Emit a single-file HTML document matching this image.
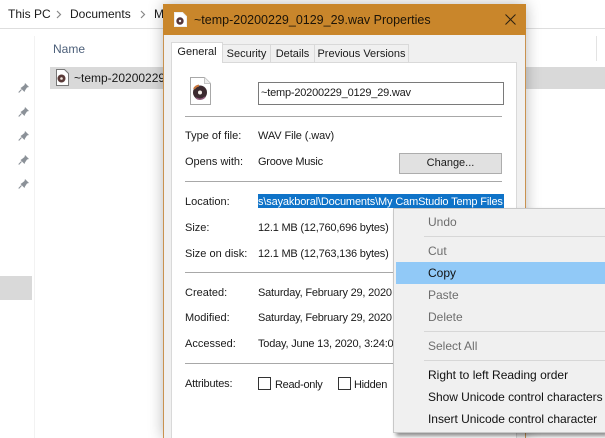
<!DOCTYPE html>
<html>
<head>
<meta charset="utf-8">
<style>
html,body{margin:0;padding:0;background:#fff;overflow:hidden;}
#p{position:relative;width:605px;height:438px;overflow:hidden;background:#fff;font-family:"Liberation Sans",sans-serif;font-size:12px;color:#1a1a1a;}
.a{position:absolute;}
.t{position:absolute;white-space:nowrap;line-height:14px;}
.l{position:absolute;white-space:nowrap;line-height:14px;font-size:11px;}
.sep{position:absolute;height:1px;background:#a8a8a8;}
.m{position:absolute;left:428px;white-space:nowrap;line-height:14px;color:#111;font-size:12px;}
.d{color:#6d6d6d;}
.ms{position:absolute;left:424px;width:181px;height:1px;background:#d7d7d7;}
.tab{position:absolute;top:44px;height:18px;background:#f0f0f0;border:1px solid #d9d9d9;border-bottom:none;box-sizing:border-box;text-align:center;line-height:19px;font-size:11px;}
.cb{position:absolute;width:13px;height:13px;border:1px solid #333;background:#fff;box-sizing:border-box;}
</style>
</head>
<body>
<div id="p">
  <!-- explorer -->
  <div class="t" style="left:8px;top:7px;">This PC</div>
  <svg class="a" style="left:56px;top:10px" width="6" height="9"><path d="M1 1l3.500 3.500L1 8" fill="none" stroke="#888" stroke-width="1.200"/></svg>
  <div class="t" style="left:70px;top:7px;">Documents</div>
  <svg class="a" style="left:140px;top:10px" width="6" height="9"><path d="M1 1l3.500 3.500L1 8" fill="none" stroke="#888" stroke-width="1.200"/></svg>
  <div class="t" style="left:154px;top:7px;">M</div>
  <div class="a" style="left:0;top:28px;width:605px;height:1px;background:#dedede;"></div>
  <div class="a" style="left:34px;top:36px;width:1px;height:402px;background:#f2f2f2;"></div>
  <div class="t" style="left:53px;top:42px;color:#4d607a;">Name</div>
  <div class="a" style="left:596px;top:36px;width:1px;height:25px;background:#e3e3e3;"></div>
  <div class="a" style="left:50px;top:67px;width:555px;height:22px;background:#d9d9d9;"></div>
  <svg class="a" style="left:56px;top:69px" width="13" height="17"><path d="M.5.500h8l4 4v12H.5z" fill="#fff" stroke="#777"/><circle cx="5.500" cy="9.500" r="4" fill="#5a3a38"/><circle cx="5.500" cy="9.500" r="1.300" fill="#f3e9e0"/></svg>
  <div class="t" style="left:74px;top:71px;">~temp-20200229</div>
  <div class="a" style="left:0;top:276px;width:32px;height:24px;background:#d9d9d9;"></div>
  <svg class="a" style="left:18px;top:82px" width="12" height="108" fill="#8b9198" stroke="#8b9198">
    <g><path d="M7 1l4 4-2 .5-2 3-.5 1.500-4-4L4 5l2.500-2z" stroke="none"/><path d="M3.500 7.500L.7 10.500" fill="none" stroke-width="1"/></g>
    <g transform="translate(0,24)"><path d="M7 1l4 4-2 .5-2 3-.5 1.500-4-4L4 5l2.500-2z" stroke="none"/><path d="M3.500 7.500L.7 10.500" fill="none" stroke-width="1"/></g>
    <g transform="translate(0,48)"><path d="M7 1l4 4-2 .5-2 3-.5 1.500-4-4L4 5l2.500-2z" stroke="none"/><path d="M3.500 7.500L.7 10.500" fill="none" stroke-width="1"/></g>
    <g transform="translate(0,72)"><path d="M7 1l4 4-2 .5-2 3-.5 1.500-4-4L4 5l2.500-2z" stroke="none"/><path d="M3.500 7.500L.7 10.500" fill="none" stroke-width="1"/></g>
    <g transform="translate(0,96)"><path d="M7 1l4 4-2 .5-2 3-.5 1.500-4-4L4 5l2.500-2z" stroke="none"/><path d="M3.500 7.500L.7 10.500" fill="none" stroke-width="1"/></g>
  </svg>

  <!-- dialog -->
  <div class="a" style="left:163px;top:4px;width:363px;height:434px;background:#f0f0f0;border-left:1px solid #c9924f;border-right:1px solid #c9924f;box-sizing:border-box;box-shadow:0 0 14px rgba(0,0,0,.28);"></div>
  <div class="a" style="left:163px;top:4px;width:363px;height:31px;background:#c9862b;"></div>
  <svg class="a" style="left:174px;top:12px" width="13" height="15"><path d="M.5.500h8l4 4v10H.5z" fill="#fff" stroke="#eee"/><circle cx="6" cy="9" r="3.700" fill="#55363a"/><circle cx="6" cy="9" r="1.200" fill="#eee"/></svg>
  <div class="t" style="left:194px;top:13px;font-size:12.500px;color:#1c1408;">~temp-20200229_0129_29.wav Properties</div>
  <svg class="a" style="left:505px;top:14px" width="11" height="11"><path d="M.5.500l10 10M10.500.500l-10 10" stroke="#2b2112" stroke-width="1" fill="none"/></svg>

  <div class="a" style="left:171px;top:62px;width:346px;height:376px;background:#fff;border:1px solid #d9d9d9;border-bottom:none;box-sizing:border-box;"></div>
  <div class="tab" style="left:222px;width:49px;">Security</div>
  <div class="tab" style="left:270px;width:45px;">Details</div>
  <div class="tab" style="left:314px;width:95px;">Previous Versions</div>
  <div class="tab" style="left:171px;top:42px;width:52px;height:21px;background:#fff;line-height:19px;">General</div>

  <svg class="a" style="left:190px;top:77px" width="21" height="28"><path d="M.5.500h14l6 6v21H.5z" fill="#fff" stroke="#a8a8a8"/><path d="M14.500.500v6h6" fill="#eee" stroke="#c4c4c4"/><circle cx="10" cy="15.500" r="7" fill="#3b2a30"/><path d="M4 12a7 7 0 0 1 5-3.500" fill="none" stroke="#c8763c" stroke-width="2"/><path d="M15 20a7 7 0 0 1-9 1" fill="none" stroke="#8d5a7a" stroke-width="1.500"/><circle cx="10" cy="15.500" r="2" fill="#f5efe9"/></svg>
  <div class="a" style="left:258px;top:82px;width:246px;height:23px;border:1px solid #7a7a7a;box-sizing:border-box;background:#fff;"></div>
  <div class="l" style="left:261px;top:86px;letter-spacing:-.2px;">~temp-20200229_0129_29.wav</div>
  <div class="sep" style="left:185px;top:116px;width:317px;"></div>

  <div class="l" style="left:185px;top:129px;">Type of file:</div>
  <div class="l" style="left:258px;top:129px;letter-spacing:-.1px;">WAV File (.wav)</div>
  <div class="l" style="left:185px;top:155px;">Opens with:</div>
  <div class="l" style="left:258px;top:155px;letter-spacing:-.25px;">Groove Music</div>
  <div class="a" style="left:399px;top:153px;width:103px;height:21px;background:#e1e1e1;border:1px solid #adadad;box-sizing:border-box;text-align:center;line-height:19px;font-size:11px;">Change...</div>
  <div class="sep" style="left:185px;top:181px;width:317px;"></div>

  <div class="l" style="left:185px;top:195px;">Location:</div>
  <div class="a" style="left:258px;top:194px;width:246px;height:14px;background:#0f73c8;"></div>
  <div class="l" style="left:258px;top:195px;width:246px;overflow:hidden;color:#fff;letter-spacing:-.15px;">s\sayakboral\Documents\My CamStudio Temp Files</div>
  <div class="l" style="left:185px;top:221px;">Size:</div>
  <div class="l" style="left:258px;top:221px;letter-spacing:-.2px;">12.1 MB (12,760,696 bytes)</div>
  <div class="l" style="left:185px;top:247px;">Size on disk:</div>
  <div class="l" style="left:258px;top:247px;letter-spacing:-.2px;">12.1 MB (12,763,136 bytes)</div>
  <div class="sep" style="left:185px;top:272px;width:317px;"></div>

  <div class="l" style="left:185px;top:286px;">Created:</div>
  <div class="l" style="left:258px;top:286px;letter-spacing:-.2px;">Saturday, February 29, 2020</div>
  <div class="l" style="left:185px;top:311px;">Modified:</div>
  <div class="l" style="left:258px;top:311px;letter-spacing:-.2px;">Saturday, February 29, 2020</div>
  <div class="l" style="left:185px;top:337px;">Accessed:</div>
  <div class="l" style="left:258px;top:337px;letter-spacing:-.2px;">Today, June 13, 2020, 3:24:0</div>
  <div class="sep" style="left:185px;top:363px;width:317px;"></div>

  <div class="l" style="left:185px;top:377px;letter-spacing:-.2px;">Attributes:</div>
  <div class="cb" style="left:258px;top:377px;"></div>
  <div class="l" style="left:275px;top:378px;letter-spacing:-.3px;">Read-only</div>
  <div class="cb" style="left:338px;top:377px;"></div>
  <div class="l" style="left:354px;top:378px;letter-spacing:-.3px;">Hidden</div>

  <!-- context menu -->
  <div class="a" style="left:393px;top:208px;width:212px;height:225px;background:#f0f0f0;border:1px solid #c8c8c8;border-right:none;box-sizing:border-box;box-shadow:3px 3px 4px rgba(0,0,0,.45);"></div>
  <div class="m d" style="top:215px;">Undo</div>
  <div class="ms" style="top:236px;"></div>
  <div class="m d" style="top:244px;">Cut</div>
  <div class="a" style="left:396px;top:262px;width:209px;height:22px;background:#91c9f7;"></div>
  <div class="m" style="top:266px;">Copy</div>
  <div class="m d" style="top:288px;">Paste</div>
  <div class="m d" style="top:310px;">Delete</div>
  <div class="ms" style="top:331px;"></div>
  <div class="m d" style="top:339px;">Select All</div>
  <div class="ms" style="top:360px;"></div>
  <div class="m" style="top:368px;">Right to left Reading order</div>
  <div class="m" style="top:390px;letter-spacing:-.05px;">Show Unicode control characters</div>
  <div class="m" style="top:412px;letter-spacing:-.03px;">Insert Unicode control character</div>
</div>
</body>
</html>
